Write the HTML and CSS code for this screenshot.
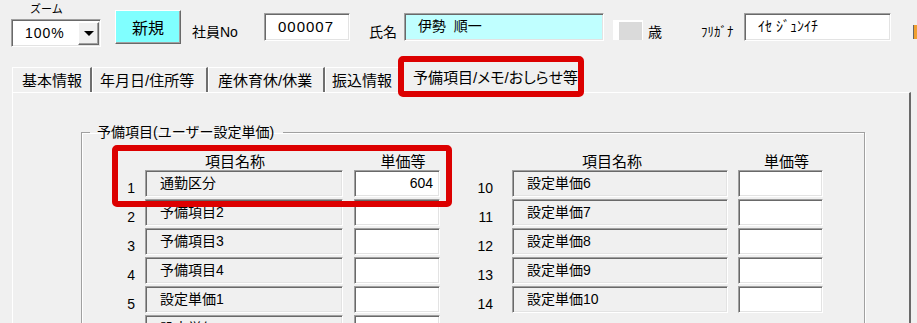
FILE: index.html
```html
<html lang="ja">
<head>
    <meta charset="UTF-8">
    <meta name="viewport" content="width=device-width, initial-scale=1.0">
    <title>社員情報</title>
    <link rel="stylesheet" href="styles.css">
</head>
<body>
<div class="screen">
    <div class="topbar">
        <div class="zoom">
            <div class="zoom-label">ズーム</div>
            <div class="combo">
                <span class="combo-value">100%</span>
                <span class="combo-btn"><span class="arrow"></span></span>
            </div>
        </div>
        <button class="btn-new">新規</button>
        <span class="lbl lbl-no">社員No</span>
        <div class="box box-no">000007</div>
        <span class="lbl lbl-name">氏名</span>
        <div class="box box-name">伊勢&nbsp; 順一</div>
        <div class="age-box"></div>
        <span class="lbl lbl-age">歳</span>
        <span class="lbl lbl-kana">ﾌﾘｶﾞﾅ</span>
        <div class="box box-kana">ｲｾ ｼﾞｭﾝｲﾁ</div>
        <span class="edge-icon"></span>
    </div>

    <div class="tabs">
        <div class="tab tab-1">基本情報</div>
        <div class="tab tab-2">年月日/住所等</div>
        <div class="tab tab-3">産休育休/休業</div>
        <div class="tab tab-4">振込情報</div>
        <div class="tab tab-active">予備項目/メモ/おしらせ等</div>
    </div>

    <div class="panel">
        <fieldset class="group">
            <legend>予備項目(ユーザー設定単価)</legend>
            <div class="group-body">
                <div class="col col-left">
                    <span></span>
                    <span class="head head-name">項目名称</span>
                    <span class="head head-value">単価等</span>

                    <span class="num">1</span><span class="field name">通勤区分</span><span class="field value">604</span>
                    <span class="num">2</span><span class="field name">予備項目2</span><span class="field value"></span>
                    <span class="num">3</span><span class="field name">予備項目3</span><span class="field value"></span>
                    <span class="num">4</span><span class="field name">予備項目4</span><span class="field value"></span>
                    <span class="num">5</span><span class="field name">設定単価1</span><span class="field value"></span>
                    <span class="num"></span><span class="field name">設定単価2</span><span class="field value"></span>
                </div>
                <div class="col col-right">
                    <span></span>
                    <span class="head head-name">項目名称</span>
                    <span class="head head-value">単価等</span>

                    <span class="num">10</span><span class="field name">設定単価6</span><span class="field value"></span>
                    <span class="num">11</span><span class="field name">設定単価7</span><span class="field value"></span>
                    <span class="num">12</span><span class="field name">設定単価8</span><span class="field value"></span>
                    <span class="num">13</span><span class="field name">設定単価9</span><span class="field value"></span>
                    <span class="num">14</span><span class="field name">設定単価10</span><span class="field value"></span>
                </div>
            </div>
        </fieldset>
    </div>

    <div class="mark mark-tab"></div>
    <div class="mark mark-row"></div>
</div>
</body>
</html>
```

FILE: styles.css
```css
* {
    box-sizing: border-box;
}
body {
    margin: 0;
    height: 323px;
    overflow: hidden;
    background: #f0f0f0;
    font-family: "Liberation Sans", "Noto Sans CJK JP", sans-serif;
    font-size: 14px;
    color: #000;
}
.screen {
    position: relative;
    height: 323px;
    overflow: hidden;
}

/* top bar */
.topbar {
    display: flex;
    align-items: flex-start;
    height: 50px;
    padding-left: 11px;
}
.topbar > * {
    flex-shrink: 0;
}
.zoom {
    width: 90px;
}
.zoom-label {
    height: 19px;
    padding: 2px 0 0 19px;
    font-size: 11px;
    line-height: 14px;
}
.combo {
    display: flex;
    align-items: center;
    justify-content: space-between;
    height: 28px;
    background: #fff;
    border: 1px solid;
    border-color: #a0a0a0 #fff #fff #a0a0a0;
    box-shadow: inset 1px 1px #696969, inset -1px -1px #e3e3e3;
    padding: 0 1px 0 13px;
}
.combo-value {
    letter-spacing: 1px;
    font-size: 14px;
}
.combo-btn {
    display: flex;
    align-items: center;
    justify-content: center;
    width: 21px;
    height: 23px;
    background: #f0f0f0;
    border: 1px solid;
    border-color: #fff #696969 #696969 #fff;
    box-shadow: inset -1px -1px #a0a0a0;
}
.arrow {
    width: 0;
    height: 0;
    border-left: 5px solid transparent;
    border-right: 5px solid transparent;
    border-top: 5px solid #000;
}
.btn-new {
    width: 66px;
    height: 34px;
    margin: 10px 0 0 14px;
    padding: 0;
    background: #80ffff;
    border: 1px solid;
    border-color: #fff #696969 #696969 #fff;
    box-shadow: inset -1px -1px #a0a0a0;
    font-family: "Liberation Sans", "Noto Sans CJK JP", sans-serif;
    font-size: 16px;
    color: #000;
}
.lbl {
    margin-top: 23px;
    line-height: 18px;
}
.lbl-no {
    width: 72px;
    margin-left: 11px;
}
.lbl-name {
    width: 35px;
    margin-left: 19px;
}
.lbl-age {
    width: 53px;
    margin-left: 5px;
}
.lbl-kana {
    width: 43px;
    font-size: 13px;
}
.box {
    height: 28px;
    margin-top: 13px;
    background: #fff;
    border: 1px solid;
    border-color: #a0a0a0 #fff #fff #a0a0a0;
    box-shadow: inset 1px 1px #696969, inset -1px -1px #e3e3e3;
    padding-left: 13px;
    line-height: 25px;
}
.box-no {
    width: 86px;
    font-size: 15px;
    letter-spacing: 1px;
}
.box-name {
    width: 200px;
    background: #c0ffff;
}
.box-kana {
    width: 147px;
}
.age-box {
    width: 30px;
    height: 20px;
    margin: 20px 0 0 9px;
    background: #dadada;
    border-left: 6px solid #fff;
    border-top: 2px solid #fff;
    border-right: 1px solid #fff;
}
.edge-icon {
    width: 4px;
    height: 14px;
    margin: 25px 0 0 22px;
    border-left: 1px solid #666;
    background: #f0a030;
}

/* tabs */
.tabs {
    display: flex;
    align-items: flex-end;
    height: 42px;
    padding-left: 12px;
}
.tab {
    flex-shrink: 0;
    height: 25px;
    padding: 2px 0 0 9px;
    border-top: 1px solid #fff;
    border-left: 1px solid #fff;
    border-right: 2px solid #6e6e6e;
    font-size: 15px;
    line-height: 21px;
    white-space: nowrap;
}
.tab-1 { width: 80px; }
.tab-2 { width: 116px; padding-left: 7px; }
.tab-3 { width: 117px; }
.tab-4 { width: 75px; padding-left: 6px; }
.tab-active {
    width: 178px;
    height: 32px;
    margin-left: 3px;
    padding-top: 6px;
    padding-left: 9px;
    font-feature-settings: "palt";
}

/* panel */
.panel {
    height: 231px;
    margin: 0 6px 0 12px;
    border-top: 1px solid #fff;
    border-left: 1px solid #fff;
    border-right: 2px solid #696969;
    padding: 29px 0 0 68px;
}
.group {
    width: 784px;
    margin: 0;
    padding: 13px 0 0 0;
    border: 1px solid #a0a0a0;
    box-shadow: inset 1px 1px #fff, 1px 1px #fff;
}
.group legend {
    margin-left: 8px;
    padding: 0 9px 0 7px;
    font-size: 14px;
    line-height: 20px;
}
.group-body {
    display: flex;
    gap: 25px;
}
.col {
    display: grid;
    grid-auto-rows: 27px;
    grid-template-rows: 13px;
    row-gap: 2px;
}
.col-left {
    grid-template-columns: 63px 209px 86px;
}
.col-right {
    grid-template-columns: 47px 226px 85px;
}
.head {
    font-size: 15px;
    line-height: 13px;
    white-space: nowrap;
}
.head-name {
    text-align: center;
    padding-right: 18px;
}
.col-left .head-name { width: 198px; }
.col-right .head-name { width: 216px; padding-right: 16px; }
.head-value {
    text-align: center;
    padding-left: 12px;
}
.num {
    display: flex;
    align-items: flex-end;
    justify-content: flex-end;
    padding-right: 10px;
    font-size: 14px;
    line-height: 17px;
}
.col-right .num {
    padding-right: 19px;
}
.field {
    height: 27px;
    border: 1px solid;
    border-color: #a0a0a0 #fff #fff #a0a0a0;
    box-shadow: inset 1px 1px #696969, inset -1px -1px #e3e3e3;
    line-height: 25px;
    white-space: nowrap;
}
.field.name {
    background: #f0f0f0;
    padding-left: 14px;
}
.col-left .field.name { width: 198px; }
.col-right .field.name { width: 216px; }
.field.value {
    background: #fff;
    text-align: right;
    padding-right: 6px;
}

/* highlight marks */
.mark {
    position: absolute;
    border: 6px solid #dc0000;
    border-radius: 5px;
}
.mark-tab {
    left: 398px;
    top: 56px;
    width: 186px;
    height: 41px;
}
.mark-row {
    left: 112px;
    top: 145px;
    width: 340px;
    height: 62px;
}
```
